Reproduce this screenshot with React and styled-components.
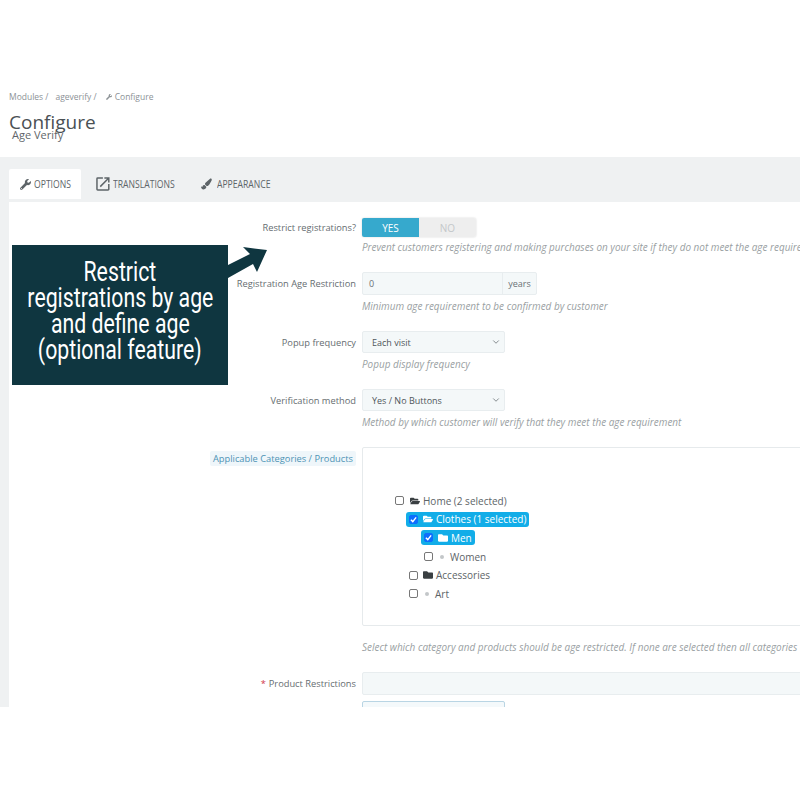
import React from 'react';
import styled, { createGlobalStyle } from 'styled-components';
import { FaWrench, FaFolder, FaFolderOpen, FaPaintBrush } from 'react-icons/fa';
import { MdOpenInNew } from 'react-icons/md';
import { ChevronDown } from 'lucide-react';

const Global = createGlobalStyle`
  html, body { margin: 0; padding: 0; background: #fff; }
  body { font-family: "Open Sans", "Liberation Sans", sans-serif; }
`;

const Page = styled.div`
  position: relative;
  width: 800px;
  height: 800px;
  overflow: hidden;
  background: #fff;
`;

const Header = styled.header`
  height: 157px;
  box-sizing: border-box;
  padding: 91px 0 0 9px;
`;

const Crumbs = styled.div`
  display: flex;
  align-items: center;
  height: 11px;
  font-size: 8.5px;
  color: #8c9296;
`;

const Crumb = styled.span`
  display: inline-flex;
  align-items: center;
  gap: 3px;
  margin-right: ${(p) => p.$gap || 0}px;
`;

const Title = styled.h1`
  margin: 8px 0 0;
  font-size: 19px;
  line-height: 24px;
  font-weight: 400;
  color: #4a5054;
`;

const Sub = styled.div`
  margin: -6px 0 0 3px;
  font-size: 11px;
  line-height: 14px;
  color: #5f666a;
`;

const Band = styled.main`
  height: 550px;
  box-sizing: border-box;
  background: #eff1f2;
  padding-left: 9px;
  overflow: hidden;
`;

const Tabs = styled.nav`
  display: flex;
  height: 45px;
  padding-top: 12px;
  box-sizing: border-box;
`;

const Tab = styled.div`
  display: flex;
  align-items: center;
  gap: ${(p) => p.$gap}px;
  width: ${(p) => p.$w}px;
  height: 30px;
  box-sizing: border-box;
  padding-left: ${(p) => p.$pl}px;
  background: ${(p) => (p.$active ? '#fff' : 'transparent')};
  color: #5d6468;
  font-size: 10.5px;
  border-radius: 2px 2px 0 0;
  & > span {
    display: inline-block;
    transform: scaleX(0.82);
    transform-origin: left center;
    white-space: nowrap;
  }
`;

const Panel = styled.section`
  background: #fff;
  height: 505px;
  overflow: hidden;
  padding-top: 16px;
  box-sizing: border-box;
`;

const Row = styled.div`
  display: grid;
  grid-template-columns: 347px 1fr;
  column-gap: 6px;
  margin-bottom: ${(p) => p.$mb}px;
`;

const Label = styled.div`
  height: ${(p) => p.$h || 20}px;
  display: flex;
  align-items: center;
  justify-content: flex-end;
  font-size: 9.3px;
  color: #666d71;
  white-space: nowrap;
`;

const HighlightLabel = styled.span`
  background: #eff6fa;
  color: #4d93b5;
  padding: 1px 3px;
  border-radius: 2px;
`;

const Star = styled.span`
  color: #d0374a;
  margin-right: 3px;
`;

const Control = styled.div`
  min-width: 0;
  white-space: nowrap;
`;

const Toggle = styled.div`
  display: flex;
  width: 114px;
  height: 19px;
  border-radius: 2px;
  overflow: hidden;
  font-size: 10px;
  box-shadow: 0 0 2px rgba(0, 0, 0, 0.18);
`;

const ToggleOpt = styled.div`
  flex: 0 0 ${(p) => p.$w}px;
  display: flex;
  align-items: center;
  justify-content: center;
  background: ${(p) => (p.$on ? '#36a9cd' : '#eeeeee')};
  color: ${(p) => (p.$on ? '#fff' : '#c4c8ca')};
`;

const Help = styled.p`
  margin: ${(p) => p.$mt}px 0 0;
  font-size: 9.95px;
  line-height: 14px;
  font-style: italic;
  color: #9a9fa3;
`;

const InputGroup = styled.div`
  display: flex;
  width: 175px;
  height: 23px;
  background: #f4f8f9;
  border: 1px solid #e8edef;
  box-sizing: border-box;
  border-radius: 2px;
  font-size: 9px;
  color: #6b7276;
`;

const InputValue = styled.div`
  flex: 1;
  display: flex;
  align-items: center;
  padding-left: 6px;
`;

const Addon = styled.div`
  width: 33px;
  display: flex;
  align-items: center;
  justify-content: center;
  border-left: 1px solid #e8edef;
`;

const Select = styled.div`
  display: flex;
  align-items: center;
  justify-content: space-between;
  width: 143px;
  height: 22px;
  box-sizing: border-box;
  padding: 0 3px 0 9px;
  background: #f4f8f9;
  border: 1px solid #e8edef;
  border-radius: 2px;
  font-size: 9px;
  color: #4f5659;
`;

const TreeBox = styled.div`
  width: 520px;
  height: 179px;
  box-sizing: border-box;
  border: 1px solid #e6eaec;
  border-radius: 2px;
  padding-top: 43.5px;
`;

const TreeRow = styled.div`
  display: flex;
  align-items: center;
  height: 18.6px;
  padding-left: ${(p) => p.$indent}px;
`;

const TreeItem = styled.div`
  display: inline-flex;
  align-items: center;
  height: 15px;
  padding: 0 3px 0 3px;
  border-radius: 3px;
  font-size: 10px;
  color: ${(p) => (p.$on ? '#fff' : '#5d6468')};
  background: ${(p) => (p.$on ? '#12ade8' : 'transparent')};
`;

const Check = styled.span`
  display: inline-flex;
  align-items: center;
  justify-content: center;
  width: 9px;
  height: 9px;
  box-sizing: border-box;
  border-radius: 2px;
  margin-right: ${(p) => p.$mr || 5}px;
  background: ${(p) => (p.$on ? '#0d6efd' : '#fff')};
  border: 1px solid ${(p) => (p.$on ? '#0d6efd' : '#777')};
`;

const Dot = styled.span`
  width: 4px;
  height: 4px;
  border-radius: 50%;
  background: #c3c7c9;
  margin: 1px 6px 0 4px;
`;

const FolderIcon = styled.span`
  display: inline-flex;
  margin-right: 3px;
  color: ${(p) => (p.$on ? '#fff' : '#3a3f42')};
`;

const WideInput = styled.div`
  width: 520px;
  height: 23px;
  background: #f4f8f9;
  border: 1px solid #e8edef;
  box-sizing: border-box;
  border-radius: 2px;
`;

const BlueBox = styled.div`
  width: 143px;
  height: 30px;
  margin-top: 6px;
  background: #f4f9fb;
  border: 1px solid #b9d5e4;
  border-radius: 2px;
  box-sizing: border-box;
`;

const Callout = styled.aside`
  position: absolute;
  left: 12px;
  top: 245px;
  width: 216px;
  height: 140px;
  box-sizing: border-box;
  padding-top: 14px;
  background: #0f3640;
  color: #fff;
  display: flex;
  flex-direction: column;
  align-items: center;
  font-family: "Roboto", "Liberation Sans", sans-serif;
`;

const CalloutLine = styled.div`
  font-size: 28px;
  line-height: 26px;
  white-space: nowrap;
  transform: scaleX(0.76);
`;

const Arrow = styled.svg`
  position: absolute;
  left: 226px;
  top: 245px;
`;

const Tick = () => (
  <svg width="7" height="7" viewBox="0 0 8 8">
    <path d="M1 4.2 L3.2 6.4 L7 1.6" fill="none" stroke="#fff" strokeWidth="1.6" />
  </svg>
);

const Node = ({ indent, on, icon, dot, mr, children }) => (
  <TreeRow $indent={indent}>
    {on ? (
      <TreeItem $on>
        <Check $on $mr={mr}><Tick /></Check>
        {icon}
        {children}
      </TreeItem>
    ) : (
      <TreeItem>
        <Check $mr={mr} />
        {dot && <Dot />}
        {icon}
        {children}
      </TreeItem>
    )}
  </TreeRow>
);

export default function App() {
  return (
    <Page>
      <Global />
      <Header>
        <Crumbs>
          <Crumb $gap={7}>Modules /</Crumb>
          <Crumb $gap={9}>ageverify /</Crumb>
          <Crumb><FaWrench size={6} /> Configure</Crumb>
        </Crumbs>
        <Title>Configure</Title>
        <Sub>Age Verify</Sub>
      </Header>
      <Band>
        <Tabs>
          <Tab $active $w={72} $pl={11} $gap={3}><FaWrench size={11} /><span>OPTIONS</span></Tab>
          <Tab $w={107} $pl={13} $gap={1}><MdOpenInNew size={18} /><span>TRANSLATIONS</span></Tab>
          <Tab $w={94} $pl={13} $gap={5}><FaPaintBrush size={14} /><span>APPEARANCE</span></Tab>
        </Tabs>
        <Panel>
          <Row $mb={18}>
            <Label $h={19}>Restrict registrations?</Label>
            <Control>
              <Toggle>
                <ToggleOpt $on $w={57}>YES</ToggleOpt>
                <ToggleOpt $w={57}>NO</ToggleOpt>
              </Toggle>
              <Help $mt={3}>Prevent customers registering and making purchases on your site if they do not meet the age requirement</Help>
            </Control>
          </Row>
          <Row $mb={18}>
            <Label $h={23}>Registration Age Restriction</Label>
            <Control>
              <InputGroup>
                <InputValue>0</InputValue>
                <Addon>years</Addon>
              </InputGroup>
              <Help $mt={4}>Minimum age requirement to be confirmed by customer</Help>
            </Control>
          </Row>
          <Row $mb={18}>
            <Label $h={22}>Popup frequency</Label>
            <Control>
              <Select>Each visit<ChevronDown size={10} color="#70777b" /></Select>
              <Help $mt={4}>Popup display frequency</Help>
            </Control>
          </Row>
          <Row $mb={18}>
            <Label $h={22}>Verification method</Label>
            <Control>
              <Select>Yes / No Buttons<ChevronDown size={10} color="#70777b" /></Select>
              <Help $mt={4}>Method by which customer will verify that they meet the age requirement</Help>
            </Control>
          </Row>
          <Row $mb={18}>
            <Label $h={22}><HighlightLabel>Applicable Categories / Products</HighlightLabel></Label>
            <Control>
              <TreeBox>
                <Node indent={29} mr={6} icon={<FolderIcon><FaFolderOpen size={10} /></FolderIcon>}>Home (2 selected)</Node>
                <Node indent={43} on mr={5} icon={<FolderIcon $on><FaFolderOpen size={10} /></FolderIcon>}>Clothes (1 selected)</Node>
                <Node indent={58} on mr={5} icon={<FolderIcon $on><FaFolder size={10} /></FolderIcon>}>Men</Node>
                <Node indent={58} dot mr={3}>Women</Node>
                <Node indent={43} mr={5} icon={<FolderIcon><FaFolder size={10} /></FolderIcon>}>Accessories</Node>
                <Node indent={43} dot mr={3}>Art</Node>
              </TreeBox>
              <Help $mt={14}>Select which category and products should be age restricted. If none are selected then all categories and products</Help>
            </Control>
          </Row>
          <Row $mb={0}>
            <Label $h={23}><Star>*</Star>Product Restrictions</Label>
            <Control>
              <WideInput />
              <BlueBox />
            </Control>
          </Row>
        </Panel>
      </Band>
      <Callout>
        <CalloutLine>Restrict</CalloutLine>
        <CalloutLine>registrations by age</CalloutLine>
        <CalloutLine>and define age</CalloutLine>
        <CalloutLine>(optional feature)</CalloutLine>
      </Callout>
      <Arrow width="44" height="34" viewBox="0 0 44 34">
        <path d="M2 20 L24 9 L17 2 L41 5 L31 27 L27 19 L2 33 Z" fill="#0f3640" />
      </Arrow>
    </Page>
  );
}
